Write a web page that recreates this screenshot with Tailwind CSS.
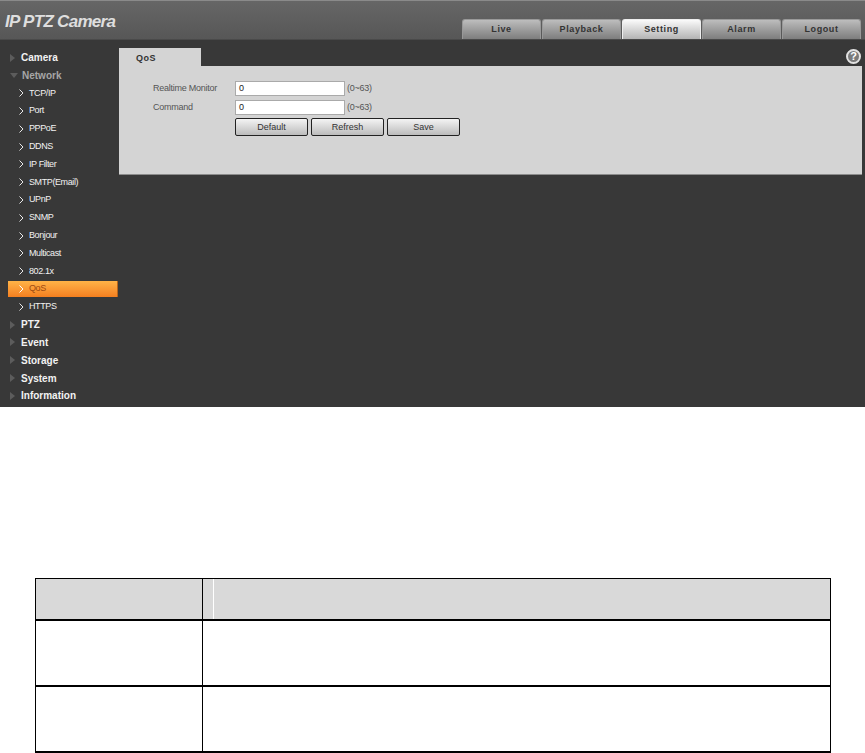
<!DOCTYPE html>
<html lang="en">
<head>
  <meta charset="UTF-8">
  <title>IP PTZ Camera</title>
  <script src="https://cdn.jsdelivr.net/npm/@tailwindcss/browser@4"></script>
</head>
<body class="bg-white font-['Liberation_Sans',Arial,sans-serif] w-[865px] h-[753px] overflow-hidden">

  <!-- camera web ui -->
  <div class="relative h-[407px] bg-[#383838] flex flex-col">
    <header class="h-[40px] border-t border-[#8a8a8a] bg-gradient-to-b from-[#666666] to-[#575757] border-b-[#4a4a4a] border-b flex justify-between items-end pr-[4px]">
      <div class="self-start pl-[5px] pt-[10px] text-[17px] leading-[22px] font-bold italic tracking-[-0.7px] text-[#dedede]">IP PTZ Camera</div>
      <nav class="flex gap-px text-[9px] font-bold tracking-[0.6px] text-[#333]">
        <div class="w-[79px] h-[20px] pt-px rounded-t-[3px] border border-b-0 border-[#999] bg-gradient-to-b from-[#bdbdbd] to-[#7e7e7e] flex items-center justify-center">Live</div>
        <div class="w-[79px] h-[20px] pt-px rounded-t-[3px] border border-b-0 border-[#999] bg-gradient-to-b from-[#bdbdbd] to-[#7e7e7e] flex items-center justify-center">Playback</div>
        <div class="w-[79px] h-[20px] pt-px rounded-t-[3px] border border-b-0 border-[#eee] bg-gradient-to-b from-[#fafafa] to-[#b4b4b4] flex items-center justify-center">Setting</div>
        <div class="w-[79px] h-[20px] pt-px rounded-t-[3px] border border-b-0 border-[#999] bg-gradient-to-b from-[#bdbdbd] to-[#7e7e7e] flex items-center justify-center">Alarm</div>
        <div class="w-[79px] h-[20px] pt-px rounded-t-[3px] border border-b-0 border-[#999] bg-gradient-to-b from-[#bdbdbd] to-[#7e7e7e] flex items-center justify-center">Logout</div>
      </nav>
    </header>

    <div class="flex flex-1">
      <aside class="w-[119px] pt-[8.8px] pl-[8px] grid grid-cols-1 auto-rows-[17.8px] items-center text-[#f2f2f2]">
        <div class="flex items-center gap-[6px] pl-[2px] text-[10px] font-bold"><span class="w-0 h-0 border-y-[4px] border-y-transparent border-l-[5px] border-l-[#5c5c5c]"></span>Camera</div>
        <div class="flex items-center gap-[4px] pl-[2px] text-[10px] font-bold text-[#a6a6a6]"><span class="w-0 h-0 border-x-[4px] border-x-transparent border-t-[5px] border-t-[#5c5c5c]"></span>Network</div>
        <div class="flex items-center gap-[5px] pl-[11px] text-[9px] tracking-[-0.4px]"><svg width="5" height="8" viewBox="0 0 5 8" fill="none" stroke="#e8e8e8" stroke-width="1"><path d="M.5.5 4 4 .5 7.5"/></svg>TCP/IP</div>
        <div class="flex items-center gap-[5px] pl-[11px] text-[9px] tracking-[-0.4px]"><svg width="5" height="8" viewBox="0 0 5 8" fill="none" stroke="#e8e8e8" stroke-width="1"><path d="M.5.5 4 4 .5 7.5"/></svg>Port</div>
        <div class="flex items-center gap-[5px] pl-[11px] text-[9px] tracking-[-0.4px]"><svg width="5" height="8" viewBox="0 0 5 8" fill="none" stroke="#e8e8e8" stroke-width="1"><path d="M.5.5 4 4 .5 7.5"/></svg>PPPoE</div>
        <div class="flex items-center gap-[5px] pl-[11px] text-[9px] tracking-[-0.4px]"><svg width="5" height="8" viewBox="0 0 5 8" fill="none" stroke="#e8e8e8" stroke-width="1"><path d="M.5.5 4 4 .5 7.5"/></svg>DDNS</div>
        <div class="flex items-center gap-[5px] pl-[11px] text-[9px] tracking-[-0.4px]"><svg width="5" height="8" viewBox="0 0 5 8" fill="none" stroke="#e8e8e8" stroke-width="1"><path d="M.5.5 4 4 .5 7.5"/></svg>IP Filter</div>
        <div class="flex items-center gap-[5px] pl-[11px] text-[9px] tracking-[-0.4px]"><svg width="5" height="8" viewBox="0 0 5 8" fill="none" stroke="#e8e8e8" stroke-width="1"><path d="M.5.5 4 4 .5 7.5"/></svg>SMTP(Email)</div>
        <div class="flex items-center gap-[5px] pl-[11px] text-[9px] tracking-[-0.4px]"><svg width="5" height="8" viewBox="0 0 5 8" fill="none" stroke="#e8e8e8" stroke-width="1"><path d="M.5.5 4 4 .5 7.5"/></svg>UPnP</div>
        <div class="flex items-center gap-[5px] pl-[11px] text-[9px] tracking-[-0.4px]"><svg width="5" height="8" viewBox="0 0 5 8" fill="none" stroke="#e8e8e8" stroke-width="1"><path d="M.5.5 4 4 .5 7.5"/></svg>SNMP</div>
        <div class="flex items-center gap-[5px] pl-[11px] text-[9px] tracking-[-0.4px]"><svg width="5" height="8" viewBox="0 0 5 8" fill="none" stroke="#e8e8e8" stroke-width="1"><path d="M.5.5 4 4 .5 7.5"/></svg>Bonjour</div>
        <div class="flex items-center gap-[5px] pl-[11px] text-[9px] tracking-[-0.4px]"><svg width="5" height="8" viewBox="0 0 5 8" fill="none" stroke="#e8e8e8" stroke-width="1"><path d="M.5.5 4 4 .5 7.5"/></svg>Multicast</div>
        <div class="flex items-center gap-[5px] pl-[11px] text-[9px] tracking-[-0.4px]"><svg width="5" height="8" viewBox="0 0 5 8" fill="none" stroke="#e8e8e8" stroke-width="1"><path d="M.5.5 4 4 .5 7.5"/></svg>802.1x</div>
        <div class="flex items-center gap-[5px] pl-[11px] w-[110px] h-[16px] text-[9px] tracking-[-0.4px] text-[#9c4a12] border-r border-[#b8651b] bg-gradient-to-b from-[#ffb347] to-[#f47f1f]"><svg width="5" height="8" viewBox="0 0 5 8" fill="none" stroke="#fff" stroke-width="1"><path d="M.5.5 4 4 .5 7.5"/></svg>QoS</div>
        <div class="flex items-center gap-[5px] pl-[11px] text-[9px] tracking-[-0.4px]"><svg width="5" height="8" viewBox="0 0 5 8" fill="none" stroke="#e8e8e8" stroke-width="1"><path d="M.5.5 4 4 .5 7.5"/></svg>HTTPS</div>
        <div class="flex items-center gap-[6px] pl-[2px] text-[10px] font-bold"><span class="w-0 h-0 border-y-[4px] border-y-transparent border-l-[5px] border-l-[#5c5c5c]"></span>PTZ</div>
        <div class="flex items-center gap-[6px] pl-[2px] text-[10px] font-bold"><span class="w-0 h-0 border-y-[4px] border-y-transparent border-l-[5px] border-l-[#5c5c5c]"></span>Event</div>
        <div class="flex items-center gap-[6px] pl-[2px] text-[10px] font-bold"><span class="w-0 h-0 border-y-[4px] border-y-transparent border-l-[5px] border-l-[#5c5c5c]"></span>Storage</div>
        <div class="flex items-center gap-[6px] pl-[2px] text-[10px] font-bold"><span class="w-0 h-0 border-y-[4px] border-y-transparent border-l-[5px] border-l-[#5c5c5c]"></span>System</div>
        <div class="flex items-center gap-[6px] pl-[2px] text-[10px] font-bold"><span class="w-0 h-0 border-y-[4px] border-y-transparent border-l-[5px] border-l-[#5c5c5c]"></span>Information</div>
      </aside>

      <main class="flex-1 pt-[8px] pr-[3px]">
        <div class="w-[82px] h-[18px] pt-[3px] bg-[#d4d4d4] flex items-center pl-[17px] text-[9px] font-bold tracking-[0.5px] text-[#333]">QoS</div>
        <section class="h-[109px] bg-[#d4d4d4] border-b border-[#8c8c8c] pl-[34px] pt-[15px] text-[9px] tracking-[-0.25px] text-[#555]">
          <div class="flex items-center h-[15px] mb-[4px]">
            <span class="w-[82px]">Realtime Monitor</span>
            <div class="w-[110px] h-[15px] bg-white border border-[#aaa] flex items-center pl-[3px] text-[#222]">0</div>
            <span class="ml-[2px]">(0~63)</span>
          </div>
          <div class="flex items-center h-[15px] mb-[3px]">
            <span class="w-[82px] pt-px">Command</span>
            <div class="w-[110px] h-[15px] bg-white border border-[#aaa] flex items-center pl-[3px] text-[#222]">0</div>
            <span class="ml-[2px]">(0~63)</span>
          </div>
          <div class="flex gap-[3px] ml-[82px] text-[#333] tracking-normal">
            <button class="w-[73px] h-[18px] pt-px rounded-[2px] border border-[#222] bg-gradient-to-b from-[#f4f4f4] to-[#bcbcbc]">Default</button>
            <button class="w-[73px] h-[18px] pt-px rounded-[2px] border border-[#222] bg-gradient-to-b from-[#f4f4f4] to-[#bcbcbc]">Refresh</button>
            <button class="w-[73px] h-[18px] pt-px rounded-[2px] border border-[#222] bg-gradient-to-b from-[#f4f4f4] to-[#bcbcbc]">Save</button>
          </div>
        </section>
      </main>
    </div>

    <!-- help icon -->
    <div class="absolute left-[846px] top-[49px] w-[15px] h-[15px] rounded-full bg-[#7a7a7a] border-2 border-[#e2e2e2] flex items-center justify-center text-[11px] leading-none font-bold text-white">?</div>
  </div>

  <!-- empty document table -->
  <div class="mt-[171px] ml-[35px] w-[796px] h-[175px] border border-black border-b-2 flex flex-col">
    <div class="h-[42px] bg-[#d9d9d9] flex border-b-2 border-black">
      <div class="w-[167px] border-r border-black"></div>
      <div class="w-[10px]"></div>
      <div class="w-px bg-white"></div>
    </div>
    <div class="h-[66px] flex border-b-2 border-black">
      <div class="w-[167px] border-r border-black"></div>
    </div>
    <div class="flex-1 flex">
      <div class="w-[167px] border-r border-black"></div>
    </div>
  </div>

</body>
</html>
